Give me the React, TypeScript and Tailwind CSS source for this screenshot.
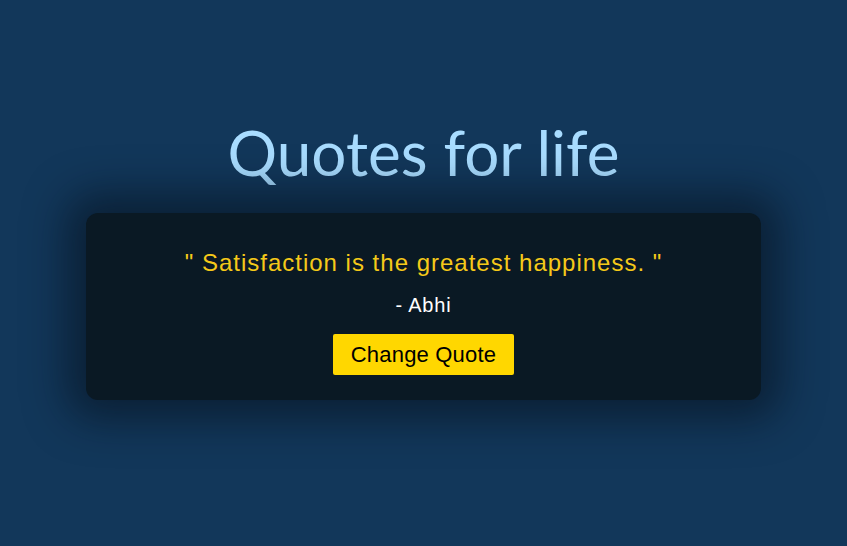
export default function App() {
  return (
    <div className="w-[847px] h-[546px] bg-[#12375a] flex flex-col items-center overflow-hidden">
      <h1 className="mt-[112px] text-[#a8dcff] text-[62px] leading-[80px] font-normal" style={{ fontFamily: '"Lato", "Open Sans", sans-serif' }}>
        Quotes for life
      </h1>
      <div className="mt-[21px] w-[675px] h-[187px] rounded-[12px] bg-[#0a1924] shadow-[0_0_40px_20px_rgba(5,15,25,0.55)] flex flex-col items-center" style={{ fontFamily: '"Liberation Sans", Arial, sans-serif' }}>
        <p className="mt-[36px] text-[#f5c919] text-[24px] leading-[28px] tracking-[1px]">" Satisfaction is the greatest happiness. "</p>
        <p className="mt-[17px] text-white text-[20px] leading-[22px] tracking-[0.8px]">- Abhi</p>
        <button className="mt-[18px] w-[181px] h-[41px] bg-[#ffd700] rounded-[2px] text-black text-[22px] leading-[26px] tracking-[0.2px]">Change Quote</button>
      </div>
    </div>
  );
}
